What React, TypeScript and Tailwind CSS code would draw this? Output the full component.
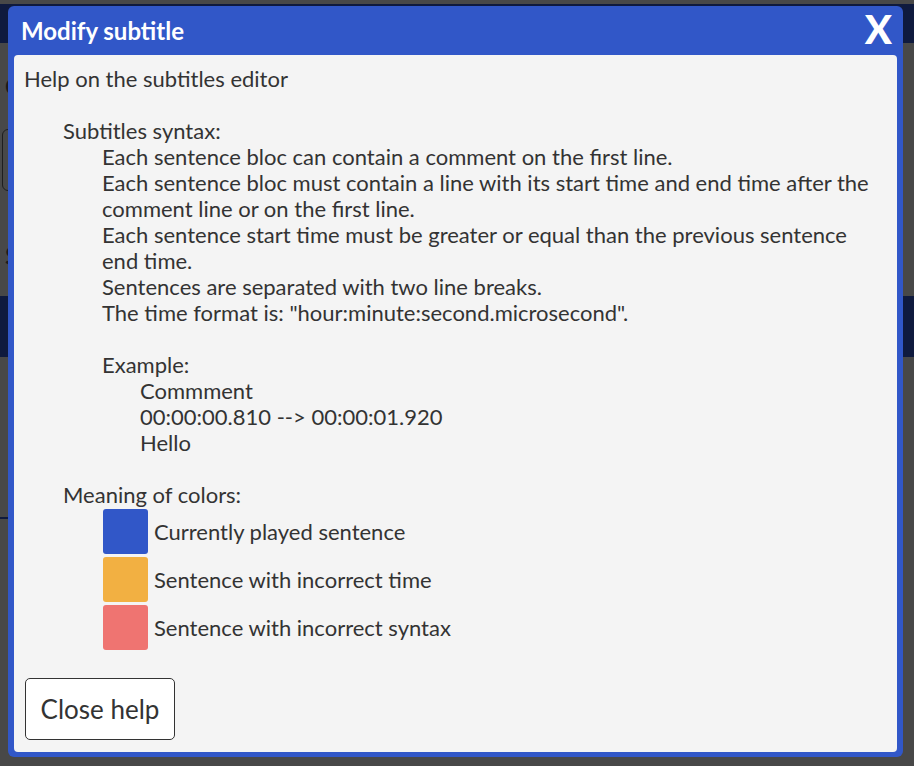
import { useState } from 'react'

const syntaxLines = [
  'Each sentence bloc can contain a comment on the first line.',
  'Each sentence bloc must contain a line with its start time and end time after the comment line or on the first line.',
  'Each sentence start time must be greater or equal than the previous sentence end time.',
  'Sentences are separated with two line breaks.',
  'The time format is: "hour:minute:second.microsecond".',
]

const exampleLines = ['Commment', '00:00:00.810 --> 00:00:01.920', 'Hello']

const colorLegend = [
  { color: 'bg-[#3157c8]', label: 'Currently played sentence' },
  { color: 'bg-[#f2b042]', label: 'Sentence with incorrect time' },
  { color: 'bg-[#ef7471]', label: 'Sentence with incorrect syntax' },
]

export default function App() {
  const [open, setOpen] = useState(true)

  return (
    <div
      className="relative w-[914px] h-[766px] overflow-hidden bg-[#484848]"
      style={{ fontFamily: 'Lato, "Open Sans", sans-serif' }}
    >
      {/* Page behind the overlay */}
      <div className="flex flex-col">
        <div className="h-[4px]" />
        <div className="h-[39px] bg-[#0f1a3e]" />
        <div className="pl-[5px] pt-[33px] text-[22px] leading-[22px] text-[#1c1c1c] font-bold">C</div>
        <div className="ml-[2px] mt-[31px] h-[62px] w-[300px] border border-[#1e1e1e] rounded-[6px]" />
        <div className="pl-[5px] mt-[53px] text-[24px] leading-[24px] text-[#1c1c1c] font-bold">S</div>
        <div className="mt-[28px] h-[61px] bg-[#0f1a3e]" />
        <div className="mt-[160px] h-[2px] w-[200px] bg-[#0f1a3e]" />
      </div>

      {/* Dialog */}
      {open && (
        <div className="absolute left-[8px] top-[6px] w-[895px] h-[751px] bg-[#3157c8] rounded-[6px] flex flex-col">
          <div className="h-[49px] flex items-center justify-between pl-[13px] pr-[11px]">
            <h1 className="text-[24px] font-bold text-white leading-none">Modify subtitle</h1>
            <button
              className="text-[40px] font-black text-white leading-none -mt-[3px]"
              onClick={() => setOpen(false)}
            >
              X
            </button>
          </div>

          <div className="flex-1 mx-[6px] mb-[5px] bg-[#f4f4f4] rounded-[4px] pl-[10px] pr-[10px] pt-[11px] flex flex-col text-[22px] leading-[26px] text-[#333333]">
            <div>Help on the subtitles editor</div>
            <div className="h-[26px]" />

            <div className="ml-[39px]">
              <div>Subtitles syntax:</div>
              <div className="ml-[39px]">
                {syntaxLines.map((line, i) => (
                  <div key={i}>{line}</div>
                ))}
                <div className="h-[26px]" />
                <div>Example:</div>
                <div className="ml-[38px]">
                  {exampleLines.map((line, i) => (
                    <div key={i}>{line}</div>
                  ))}
                </div>
              </div>

              <div className="h-[26px]" />
              <div>Meaning of colors:</div>
              <div className="ml-[40px] mt-[1px] flex flex-col gap-[3px]">
                {colorLegend.map(item => (
                  <div key={item.label} className="flex items-center gap-[6px]">
                    <div className={`w-[45px] h-[45px] rounded-[3px] ${item.color}`} />
                    <span>{item.label}</span>
                  </div>
                ))}
              </div>
            </div>

            <div className="mt-[28px] pl-[1px]">
              <button className="w-[150px] h-[62px] bg-white border border-[#333333] rounded-[5px] text-[26px] text-[#333333]">
                Close help
              </button>
            </div>
          </div>
        </div>
      )}
    </div>
  )
}
